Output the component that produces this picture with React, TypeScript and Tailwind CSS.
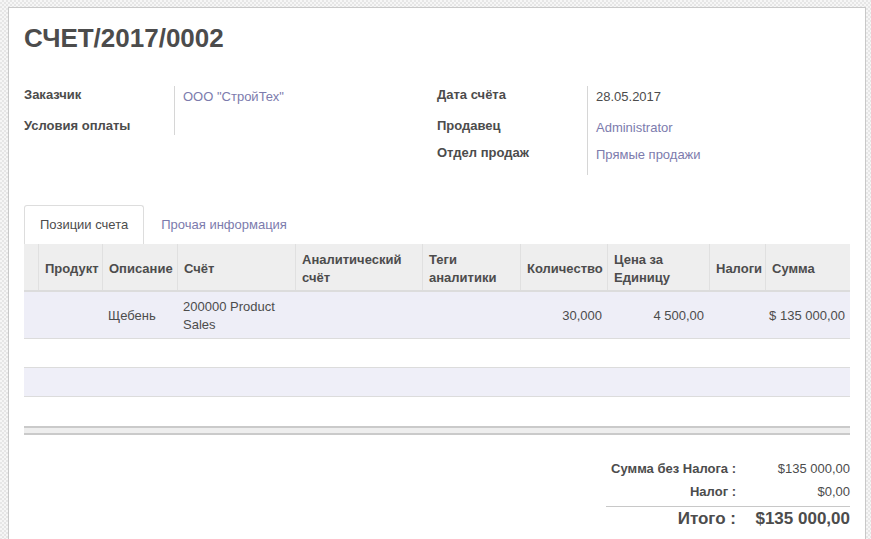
import React from "react";

const link = "text-[#7c7bad]";

const cols = "grid grid-cols-[14px_64px_75px_118px_127px_98px_87px_102px_56px_1fr]";

const headers = ["", "Продукт", "Описание", "Счёт", "Аналитический счёт", "Теги аналитики", "Количество", "Цена за Единицу", "Налоги", "Сумма"];

const Field = ({ label, value, h, valueClass }: { label: string; value?: string; h: string; valueClass?: string }) => (
  <div className={`flex ${h}`}>
    <div className="w-[150px] font-bold leading-[18px]">{label}</div>
    <div className={`flex-1 border-l border-[#d6d6d6] pl-[8px] pt-[2px] leading-[18px] ${valueClass ?? ""}`}>{value}</div>
  </div>
);

export default function App() {
  return (
    <div className="min-h-screen w-full overflow-hidden bg-[repeating-conic-gradient(#e6e6e6_0%_25%,#f6f6f6_0%_50%)] bg-size-[4px_4px] pl-2 pt-[7px] font-['Liberation_Sans',Arial,sans-serif] text-[13px] text-[#4c4c4c]">
      <div className="h-[532px] w-[858px] border border-b-0 border-[#c8c8c8] bg-white pl-[15px] pr-[15px] pt-[15px]">
        <h1 className="text-[26px] font-bold leading-[30px]">СЧЕТ/2017/0002</h1>

        <div className="mt-[33px] grid grid-cols-2">
          <div>
            <Field label="Заказчик" value={'ООО "СтройТех"'} h="h-[31px]" valueClass={link} />
            <Field label="Условия оплаты" h="h-[18px]" />
          </div>
          <div>
            <Field label="Дата счёта" value="28.05.2017" h="h-[31px]" />
            <Field label="Продавец" value="Administrator" h="h-[27px]" valueClass={link} />
            <Field label="Отдел продаж" value="Прямые продажи" h="h-[31px]" valueClass={link} />
          </div>
        </div>

        <div className="mt-[30px] flex">
          <div className="flex h-[39px] items-center rounded-t-[3px] border border-b-0 border-[#dddddd] px-[15px]">Позиции счета</div>
          <div className={`flex h-[39px] items-center px-[17px] ${link}`}>Прочая информация</div>
        </div>

        <div className={`${cols} h-[48px] border-b-2 border-[#dcdcdc] bg-[#eeeeee] font-bold leading-[18px]`}>
          {headers.map((t, i) => (
            <div key={i} className={`flex items-center px-[6px] pt-[3px] ${i > 0 ? "border-l border-[#e0e0e0]" : ""}`}>
              {t}
            </div>
          ))}
        </div>

        <div className={`${cols} h-[47px] border-b border-[#dcdcdc] bg-[#eeeef7] pt-[2px] leading-[18px]`}>
          <div />
          <div />
          <div className="flex items-center px-[6px]">Щебень</div>
          <div className="flex items-center px-[6px]">200000 Product Sales</div>
          <div />
          <div />
          <div className="flex items-center justify-end px-[5px]">30,000</div>
          <div className="flex items-center justify-end px-[5px]">4 500,00</div>
          <div />
          <div className="flex items-center justify-end whitespace-nowrap pr-[5px]">$ 135 000,00</div>
        </div>
        <div className="h-[29px] border-b border-[#dcdcdc] bg-white" />
        <div className="h-[29px] border-b border-[#dcdcdc] bg-[#efeff8]" />
        <div className="h-[29px] bg-white" />
        <div className="h-[9px] border-y-2 border-[#cacaca] bg-[#eeeeee]" />

        <div className="mt-[22px] flex justify-end">
          <div className="w-[244px]">
            <div className="flex h-[23px] items-center">
              <div className="flex-1 text-right font-bold">Сумма без Налога :</div>
              <div className="w-[114px] text-right">$135 000,00</div>
            </div>
            <div className="flex h-[23px] items-center">
              <div className="flex-1 text-right font-bold">Налог :</div>
              <div className="w-[114px] text-right">$0,00</div>
            </div>
            <div className="mt-[3px] flex h-[24px] items-center border-t border-[#c8c8c8] text-[17px] font-bold">
              <div className="flex-1 text-right">Итого :</div>
              <div className="w-[114px] text-right">$135 000,00</div>
            </div>
          </div>
        </div>
      </div>
    </div>
  );
}
